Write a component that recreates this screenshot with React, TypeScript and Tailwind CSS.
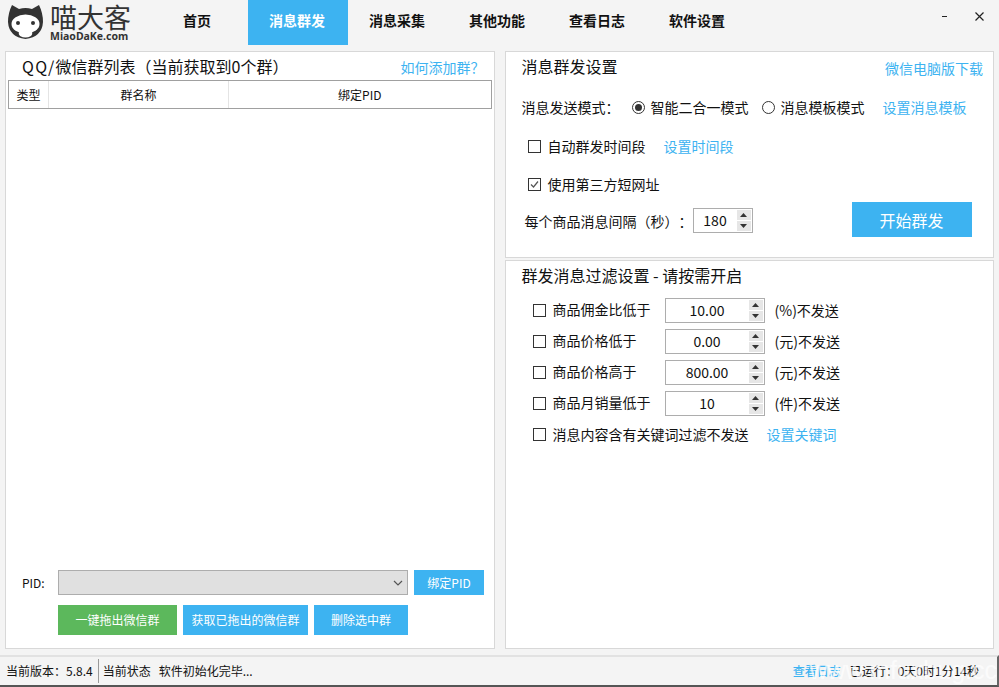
const blue = "text-[#3db3f1]";

function CheckBox({ checked = false }: { checked?: boolean }) {
  return (
    <span className="w-[13px] h-[13px] shrink-0 border border-[#333] bg-white flex items-center justify-center">
      {checked && (
        <svg width="11" height="11" viewBox="0 0 11 11" fill="none">
          <path d="M2 5.5 L4.5 8 L9 2.5" stroke="#555" strokeWidth="1.2" />
        </svg>
      )}
    </span>
  );
}

function Radio({ checked = false }: { checked?: boolean }) {
  return (
    <span className="w-[13px] h-[13px] shrink-0 rounded-full border border-[#333] bg-white flex items-center justify-center">
      {checked && <span className="w-[7px] h-[7px] rounded-full bg-[#333]" />}
    </span>
  );
}

function Spin({ value, width }: { value: string; width: string }) {
  return (
    <div className={`${width} h-[25px] border border-[#adadad] bg-white flex items-center shrink-0`}>
      <span className="flex-1 text-center text-[14px] leading-none pb-[2px]">{value}</span>
      <div className="w-[14px] h-[21px] mr-[1px] flex flex-col gap-[1px]">
        <span className="flex-1 bg-[#e6e6e6] flex items-center justify-center">
          <svg width="7" height="4" viewBox="0 0 7 4"><path d="M3.5 0 L7 4 L0 4 Z" fill="#333" /></svg>
        </span>
        <span className="flex-1 bg-[#e6e6e6] flex items-center justify-center">
          <svg width="7" height="4" viewBox="0 0 7 4"><path d="M0 0 L7 0 L3.5 4 Z" fill="#333" /></svg>
        </span>
      </div>
    </div>
  );
}

function FilterRow({ label, value, unit }: { label: string; value: string; unit: string }) {
  return (
    <div className="h-[31px] flex items-center">
      <CheckBox />
      <span className="ml-[7px] w-[112px] text-[14px] pb-[2px]">{label}</span>
      <Spin value={value} width="w-[100px]" />
      <span className="ml-[10px] text-[14px] pb-[1px]">{unit}</span>
    </div>
  );
}

function Logo() {
  return (
    <div className="w-[148px] pl-[8px] pt-[4px] flex items-start gap-[7px] shrink-0">
      <svg width="35" height="36" viewBox="0 0 35 36">
        <path d="M4 1 L11 5 Q17.5 3 24 5 L31 1 Q35 9 35 18 Q34 33 17.5 35 Q1 33 0 18 Q0 9 4 1 Z" fill="#333" />
        <ellipse cx="17.5" cy="20" rx="14" ry="9.5" fill="#fff" />
        <circle cx="10" cy="19" r="2" fill="#333" />
        <circle cx="25" cy="19" r="2" fill="#333" />
        <path d="M13 25 Q17.5 22 22 25 Q26 29 23 32 Q17.5 35 12 32 Q9 29 13 25 Z" fill="#fff" />
      </svg>
      <div className="flex flex-col text-[#333]">
        <span className="text-[27px] leading-[26px] tracking-[0px]">喵大客</span>
        <span className="text-[10.5px] leading-[12px] font-bold font-['Noto_Sans',sans-serif]">MiaoDaKe.com</span>
      </div>
    </div>
  );
}

export default function App() {
  const navs = ["首页", "消息群发", "消息采集", "其他功能", "查看日志", "软件设置"];
  return (
    <div className="relative w-[999px] h-[687px] overflow-hidden flex flex-col bg-[#f4f4f4] text-[#111] [text-spacing-trim:space-all] font-['Noto_Sans_CJK_SC','Noto_Sans',sans-serif]">
      {/* header */}
      <div className="h-[45px] flex shrink-0">
        <Logo />
        {navs.map((n) => (
          <div
            key={n}
            className={`w-[100px] h-[45px] flex items-center justify-center text-[14px] font-bold pb-[5px] pr-[2px] ${
              n === "消息群发" ? "bg-[#3db3f1] text-white" : "text-[#111]"
            }`}
          >
            {n}
          </div>
        ))}
        <div className="flex-1 flex justify-end items-start pt-[8px] pr-[15px] gap-[28px] text-[#222]">
          <span className="w-[5px] h-[1px] bg-[#222] mt-[8px]" />
          <svg width="9" height="9" viewBox="0 0 9 9" className="mt-[4px]">
            <path d="M0.5 0.5 L8.5 8.5 M8.5 0.5 L0.5 8.5" stroke="#222" strokeWidth="1.2" />
          </svg>
        </div>
      </div>

      {/* main */}
      <div className="flex-1 flex gap-[10px] px-[5px] pt-[6px] pb-[6px]">
        {/* left */}
        <div className="w-[490px] bg-white border border-[#d8d8d8] p-[1px] flex flex-col">
          <div className="h-[25px] mb-[2px] flex items-center justify-between pl-[15px] pr-[8px] shrink-0">
            <span className="text-[16px]">
              <span className="tracking-[1.3px]">QQ/</span>微信群列表（当前获取到0个群）
            </span>
            <span className={`text-[14px] mt-[4px] ${blue}`}>如何添加群？</span>
          </div>
          <div className="mx-[1px] h-[29px] border border-[#a0a0a0] flex text-[12px] shrink-0">
            <div className="w-[40px] flex items-center justify-center border-r border-[#e4e4e4]">类型</div>
            <div className="w-[180px] flex items-center justify-center border-r border-[#e4e4e4]">群名称</div>
            <div className="flex-1 flex items-center justify-center">绑定PID</div>
          </div>
          <div className="flex-1" />
          <div className="flex items-center pl-[15px] h-[25px]">
            <span className="w-[36px] text-[12px]">PID:</span>
            <div className="w-[350px] h-[25px] bg-[#e0e0e0] border border-[#adadad] flex items-center justify-end pr-[4px]">
              <svg width="10" height="6" viewBox="0 0 10 6" fill="none">
                <path d="M1 1 L5 5 L9 1" stroke="#555" strokeWidth="1.2" />
              </svg>
            </div>
            <div className="ml-[6px] w-[70px] h-[25px] bg-[#3db3f1] text-white text-[12px] flex items-center justify-center">绑定PID</div>
          </div>
          <div className="flex gap-[6px] pl-[51px] mt-[10px] mb-[12px]">
            <div className="w-[119px] h-[30px] bg-[#5cb85c] text-white text-[12px] flex items-center justify-center">一键拖出微信群</div>
            <div className="w-[125px] h-[30px] bg-[#3db3f1] text-white text-[12px] flex items-center justify-center">获取已拖出的微信群</div>
            <div className="w-[94px] h-[30px] bg-[#3db3f1] text-white text-[12px] flex items-center justify-center">删除选中群</div>
          </div>
        </div>

        {/* right */}
        <div className="w-[490px] flex flex-col gap-[2px]">
          <div className="h-[207px] bg-white border border-[#d8d8d8] p-[1px] flex flex-col shrink-0">
            <div className="h-[25px] flex items-center justify-between pl-[15px] pr-[9px] shrink-0">
              <span className="text-[16px]">消息群发设置</span>
              <span className={`text-[14px] mt-[6px] ${blue}`}>微信电脑版下载</span>
            </div>
            <div className="h-[25px] mt-[17px] flex items-center pl-[15px] text-[14px]">
              <span className="w-[110px]">消息发送模式：</span>
              <Radio checked />
              <span className="ml-[6px] w-[111px]">智能二合一模式</span>
              <Radio />
              <span className="ml-[6px] w-[102px]">消息模板模式</span>
              <span className={blue}>设置消息模板</span>
            </div>
            <div className="h-[25px] mt-[14px] flex items-center pl-[21px] text-[14px]">
              <CheckBox />
              <span className="ml-[7px] w-[116px]">自动群发时间段</span>
              <span className={blue}>设置时间段</span>
            </div>
            <div className="h-[25px] mt-[13px] flex items-center pl-[21px] text-[14px]">
              <CheckBox checked />
              <span className="ml-[7px]">使用第三方短网址</span>
            </div>
            <div className="flex items-start pl-[18px] mt-[-8px]">
              <span className="w-[168px] mt-[22px] text-[14px] leading-[20px]">每个商品消息间隔（秒）：</span>
              <div className="mt-[19px]">
                <Spin value="180" width="w-[60px]" />
              </div>
              <div className="ml-[99px] mt-[13px] w-[120px] h-[35px] bg-[#3db3f1] text-white text-[16px] flex items-center justify-center">开始群发</div>
            </div>
          </div>

          <div className="flex-1 bg-white border border-[#d8d8d8] p-[1px] flex flex-col">
            <div className="h-[25px] flex items-center pl-[15px] text-[16px] shrink-0">群发消息过滤设置 - 请按需开启</div>
            <div className="pl-[26px] mt-[8px] flex flex-col">
              <FilterRow label="商品佣金比低于" value="10.00" unit="(%)不发送" />
              <FilterRow label="商品价格低于" value="0.00" unit="(元)不发送" />
              <FilterRow label="商品价格高于" value="800.00" unit="(元)不发送" />
              <FilterRow label="商品月销量低于" value="10" unit="(件)不发送" />
              <div className="h-[31px] flex items-center text-[14px]">
                <CheckBox />
                <span className="ml-[7px] w-[214px]">消息内容含有关键词过滤不发送</span>
                <span className={blue}>设置关键词</span>
              </div>
            </div>
          </div>
        </div>
      </div>

      {/* status bar */}
      <div className="h-[32px] shrink-0 border-t-2 border-t-[#e2e2e2] border-b-2 border-b-[#555] border-r-2 border-r-[#666] flex items-center pl-[6px] pr-[18px] text-[12px]">
        <span>当前版本：5.8.4</span>
        <span className="w-[1px] h-[24px] bg-[#999] ml-[5px] mr-[4px]" />
        <span>当前状态</span>
        <span className="ml-[8px]">软件初始化完毕...</span>
        <span className="flex-1" />
        <span className={`${blue} font-medium`}>查看日志</span>
        <span className="ml-[9px]">已运行：0天0时1分14秒</span>
      </div>
      <div className="absolute right-[2px] bottom-[2px] text-[25px] leading-[30px] text-white/70 font-['Liberation_Sans',sans-serif]">
        www.mfuxbug.cc
      </div>
    </div>
  );
}
